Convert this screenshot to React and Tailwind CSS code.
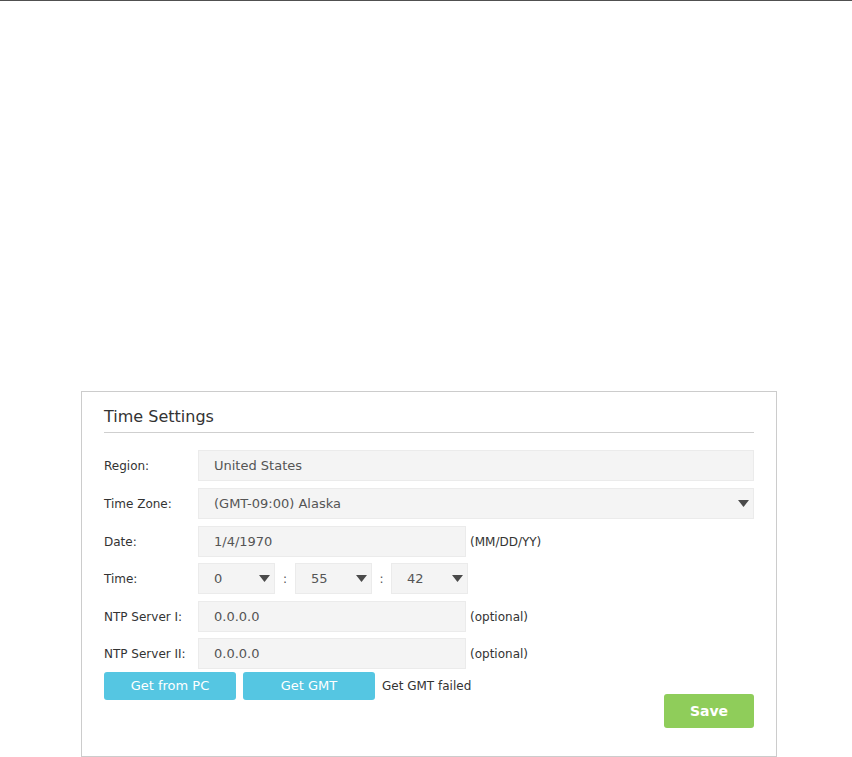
import React from 'react';

const font = { fontFamily: '"DejaVu Sans", Verdana, sans-serif' };

function Caret() {
  return (
    <svg width="11" height="7" viewBox="0 0 11 7" className="shrink-0">
      <path d="M0 0 L11 0 L5.5 7 Z" fill="#4a4a4a" />
    </svg>
  );
}

function Field({ value, className = '', select = false }) {
  return (
    <div className={`h-[31px] bg-[#f4f4f4] border border-[#ebebeb] flex items-center justify-between pl-[15px] pr-[4px] text-[13px] text-[#555] ${className}`}>
      <span>{value}</span>
      {select && <Caret />}
    </div>
  );
}

function Row({ label, children, className = '' }) {
  return (
    <div className={`flex items-center ${className}`}>
      <div className="w-[94px] shrink-0 text-[12px] text-[#333]">{label}</div>
      {children}
    </div>
  );
}

export default function App() {
  return (
    <div className="w-[852px] h-[757px] bg-white border-t border-[#505050]" style={font}>
      <div className="ml-[81px] mt-[390px] w-[696px] h-[366px] border border-[#cccccc] px-[22px]">
        <div className="pt-[13px] pb-[3px] border-b border-[#cfcfcf] text-[16px] text-[#333]">Time Settings</div>

        <div className="mt-[17px] flex flex-col">
          <Row label="Region:">
            <Field value="United States" className="flex-1" />
          </Row>
          <Row label="Time Zone:" className="mt-[7px]">
            <Field value="(GMT-09:00) Alaska" className="flex-1" select />
          </Row>
          <Row label="Date:" className="mt-[7px]">
            <Field value="1/4/1970" className="w-[268px]" />
            <span className="ml-[4px] text-[12px] text-[#333]">(MM/DD/YY)</span>
          </Row>
          <Row label="Time:" className="mt-[6px]">
            <Field value="0" className="w-[77px]" select />
            <span className="w-[20px] text-center text-[12px] text-[#555]">:</span>
            <Field value="55" className="w-[77px]" select />
            <span className="w-[19px] text-center text-[12px] text-[#555]">:</span>
            <Field value="42" className="w-[77px]" select />
          </Row>
          <Row label="NTP Server I:" className="mt-[7px]">
            <Field value="0.0.0.0" className="w-[268px]" />
            <span className="ml-[4px] text-[12px] text-[#333]">(optional)</span>
          </Row>
          <Row label="NTP Server II:" className="mt-[6px]">
            <Field value="0.0.0.0" className="w-[268px]" />
            <span className="ml-[4px] text-[12px] text-[#333]">(optional)</span>
          </Row>

          <div className="mt-[3px] flex items-center">
            <button className="w-[132px] h-[28px] rounded-[3px] bg-[#55c6e2] text-white text-[13px]">Get from PC</button>
            <button className="ml-[7px] w-[132px] h-[28px] rounded-[3px] bg-[#55c6e2] text-white text-[13px]">Get GMT</button>
            <span className="ml-[7px] text-[12px] text-[#333]">Get GMT failed</span>
          </div>

          <div className="flex justify-end -mt-[6px]">
            <button className="w-[90px] h-[34px] rounded-[3px] bg-[#8fcd5a] text-white text-[14px] font-bold">Save</button>
          </div>
        </div>
      </div>
    </div>
  );
}
